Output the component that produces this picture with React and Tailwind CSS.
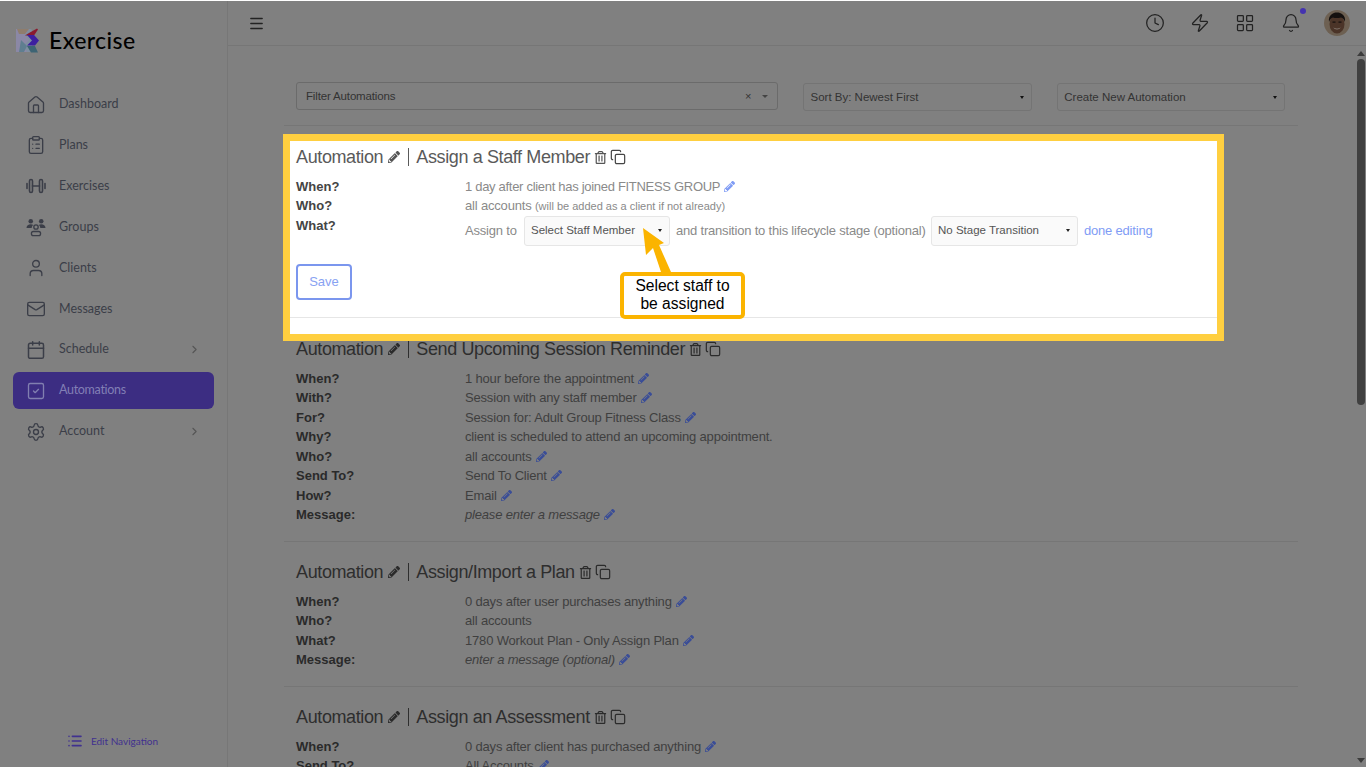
import React from 'react'
import { House, ClipboardList, Mail, Calendar, SquareCheck, Settings, ChevronRight, Clock, Zap, LayoutGrid, Bell, Menu, List, Copy, User } from 'lucide-react'
import { FaPencilAlt, FaRegTrashAlt } from 'react-icons/fa'

const DumbbellIcon = () => (
  <svg width="20" height="20" viewBox="0 0 20 20" fill="none" stroke="#3b3e48" strokeWidth="1.6" strokeLinecap="round">
    <rect x="3.5" y="3.5" width="3" height="13" rx="1.5" />
    <rect x="13.5" y="3.5" width="3" height="13" rx="1.5" />
    <path d="M6.5 10h7M1 7.5v5M19 7.5v5" />
  </svg>
)

const GroupIcon = () => (
  <svg width="21" height="20" viewBox="0 0 21 20" fill="#3b3e48">
    <circle cx="5" cy="4" r="2.4" />
    <circle cx="16" cy="4" r="2.4" />
    <path d="M0.5 11c0-2.5 2-4 4.5-4 1 0 2 .3 2.6.8-1 .7-1.6 1.9-1.6 3.2H0.5zM20.5 11c0-2.5-2-4-4.5-4-1 0-2 .3-2.6.8 1 .7 1.6 1.9 1.6 3.2h5.5z" />
    <circle cx="10.5" cy="10" r="2.3" fill="none" stroke="#3b3e48" strokeWidth="1.4" />
    <rect x="5.7" y="14.7" width="9.6" height="4.3" rx="2" fill="none" stroke="#3b3e48" strokeWidth="1.4" />
  </svg>
)

const Logo = () => (
  <svg width="25" height="25" viewBox="0 0 25 25" className="shrink-0">
    <rect x="0" y="1" width="16" height="23" rx="2" fill="#7f8ea0" />
    <path d="M0 1h13l-4 6 4 5-6 6 4 6H0z" fill="#8b88a6" />
    <path d="M1 1h12L9 6H3z" fill="#8f7d6d" />
    <path d="M13 5l8-4.5 1 1-4 6H9z" fill="#8a1a2e" />
    <path d="M11 7h7l5 5.5-4 5h-8l5-5z" fill="#3d1fa0" />
    <path d="M11 18h8l3 6.5h-7z" fill="#3d6474" />
    <path d="M5 12l6 6-3 6H3z" fill="#5f7e90" />
  </svg>
)

const Avatar = () => (
  <svg width="26" height="26" viewBox="0 0 26 26">
    <circle cx="13" cy="13" r="13" fill="#6d6052" />
    <ellipse cx="13" cy="14" rx="7.5" ry="9.5" fill="#4b3428" />
    <path d="M5 12C4 5 9 2.5 13 2.5S22 5 21 12c-1-2.5-2-4-4-4.5-3 .8-6 .8-8 0-2 .5-3 2-4 4.5z" fill="#14100f" />
    <rect x="8.5" y="11.5" width="3" height="1.2" fill="#15100e" />
    <rect x="14.5" y="11.5" width="3" height="1.2" fill="#15100e" />
    <path d="M9.5 17.5c2 1.6 5 1.6 7 0-.8 2.4-6.2 2.4-7 0z" fill="#a5a09a" />
  </svg>
)

const navItems = [
  { label: 'Dashboard', icon: <House size={20} strokeWidth={1.6} /> },
  { label: 'Plans', icon: <ClipboardList size={20} strokeWidth={1.6} /> },
  { label: 'Exercises', icon: <DumbbellIcon /> },
  { label: 'Groups', icon: <GroupIcon /> },
  { label: 'Clients', icon: <User size={20} strokeWidth={1.6} /> },
  { label: 'Messages', icon: <Mail size={20} strokeWidth={1.6} /> },
  { label: 'Schedule', icon: <Calendar size={20} strokeWidth={1.8} />, arrow: true },
  { label: 'Automations', icon: <SquareCheck size={20} strokeWidth={1.6} />, active: true },
  { label: 'Account', icon: <Settings size={20} strokeWidth={1.6} />, arrow: true },
]

const automations = [
  {
    name: 'Send Upcoming Session Reminder',
    rows: [
      ['When?', '1 hour before the appointment', true],
      ['With?', 'Session with any staff member', true],
      ['For?', 'Session for: Adult Group Fitness Class', true],
      ['Why?', 'client is scheduled to attend an upcoming appointment.', false],
      ['Who?', 'all accounts', true],
      ['Send To?', 'Send To Client', true],
      ['How?', 'Email', true],
      ['Message:', 'please enter a message', true, true],
    ],
  },
  {
    name: 'Assign/Import a Plan',
    rows: [
      ['When?', '0 days after user purchases anything', true],
      ['Who?', 'all accounts', false],
      ['What?', '1780 Workout Plan - Only Assign Plan', true],
      ['Message:', 'enter a message (optional)', true, true],
    ],
  },
  {
    name: 'Assign an Assessment',
    rows: [
      ['When?', '0 days after client has purchased anything', true],
      ['Send To?', 'All Accounts', true],
    ],
  },
]

const Title = ({ name, dim }) => (
  <div className={`flex items-center h-5 text-[18px] leading-5 tracking-[-0.38px] whitespace-nowrap ${dim ? 'text-[#2e2e2e]' : 'text-[#5a5a5a]'}`}>
    <span>Automation</span>
    <FaPencilAlt size={12} className={`ml-[5px] ${dim ? 'text-[#2b2b2b]' : 'text-[#555]'}`} />
    <span className={`ml-[8px] mr-[7px] w-px h-[18px] ${dim ? 'bg-[#2e2e2e]' : 'bg-[#5a5a5a]'}`} />
    <span>{name}</span>
    <FaRegTrashAlt size={13} className={`ml-[4px] ${dim ? 'text-[#2b2b2b]' : 'text-[#555]'}`} />
    <Copy size={16} strokeWidth={1.8} className={`ml-[3px] ${dim ? 'text-[#2b2b2b]' : 'text-[#444]'}`} />
  </div>
)

const Row = ({ label, value, edit, italic }) => (
  <div className="flex h-[19.5px] items-center text-[13px]">
    <b className="w-[169px] shrink-0 text-[#2a2a2a]">{label}</b>
    <span className={`text-[#3f3f3f] tracking-[-0.18px] whitespace-nowrap ${italic ? 'italic' : ''}`}>{value}</span>
    {edit && <FaPencilAlt size={11} className="ml-[4px] text-[#3a4d97]" />}
  </div>
)

const Dropdown = ({ label, className }) => (
  <div className={`flex items-center justify-between h-[30px] border border-[#e6e6e6] rounded-[3px] bg-[#fafafa] pl-[6px] pr-[7px] text-[11.5px] text-[#555] tracking-normal ${className}`}>
    <span className="pt-px">{label}</span>
    <span className="w-0 h-0 border-x-[2.5px] border-x-transparent border-t-[3px] border-t-[#222]" />
  </div>
)

const DimSelect = ({ label, className }) => (
  <div className={`flex items-center justify-between h-[28px] border border-[#747474] rounded-[3px] pl-[6px] pr-[7px] text-[11.5px] text-[#333] ${className}`}>
    <span className="pt-px">{label}</span>
    <span className="w-0 h-0 border-x-[2.5px] border-x-transparent border-t-[3px] border-t-[#111]" />
  </div>
)

const HighlightCard = () => (
  <div className="relative z-10 w-[941px] h-[207px] mt-2 -ml-px border-[7px] border-[#ffcf40] bg-white">
    <div className="pl-[6px] pt-[6px]">
      <Title name="Assign a Staff Member" />
      <div className="mt-[9.5px] text-[13px]">
        <div className="flex h-[19.5px] items-center">
          <b className="w-[169px] text-[#444]">When?</b>
          <span className="text-[#8a8a8a] tracking-[-0.3px]">1 day after client has joined FITNESS GROUP</span>
          <FaPencilAlt size={11} className="ml-[4px] text-[#7f9cf5]" />
        </div>
        <div className="flex h-[19.5px] items-center">
          <b className="w-[169px] text-[#444]">Who?</b>
          <span className="text-[#8a8a8a] tracking-[-0.18px]">all accounts <span className="text-[11px] tracking-normal">(will be added as a client if not already)</span></span>
        </div>
        <div className="flex h-[31px] items-start">
          <b className="w-[169px] text-[#444] leading-[19px]">What?</b>
          <div className="flex items-center text-[#8a8a8a] tracking-[-0.2px] whitespace-nowrap">
            <span className="w-[59px]">Assign to</span>
            <Dropdown label="Select Staff Member" className="w-[146px]" />
            <span className="ml-[6px] w-[255px]">and transition to this lifecycle stage (optional)</span>
            <Dropdown label="No Stage Transition" className="w-[147px]" />
            <span className="ml-[6px] text-[#7f9cf5]">done editing</span>
          </div>
        </div>
      </div>
      <button className="block mt-[17px] w-[56px] h-[36px] border-2 border-[#7b96ee] rounded-[4px] text-[13px] text-[#88a2f2]">Save</button>
    </div>
    <div className="absolute left-0 right-0 top-[176px] h-px bg-[#e6e6e6]" />
    <svg width="40" height="52" viewBox="0 0 40 52" className="absolute left-[344px] top-[84px]">
      <path d="M9 3 L30 18 L25 20 L37 47 L27 47 L19 23 L12 30 Z" fill="#fbb400" />
    </svg>
    <div className="absolute left-[330px] top-[131px] w-[125px] h-[47px] border-4 border-[#fbb400] rounded-[5px] bg-white flex items-center justify-center text-center text-[15.6px] leading-[18px] text-black">
      <span className="-mt-px">Select staff to<br />be assigned</span>
    </div>
  </div>
)

export default function App() {
  return (
    <div className="h-screen overflow-hidden bg-[#808080] border-y border-y-white flex [font-family:'Liberation_Sans',Arial,sans-serif]">
      <aside className="w-[228px] shrink-0 border-r border-[#777] flex flex-col [font-family:Lato,sans-serif]">
        <div className="flex items-center gap-[8px] pl-4 pt-[2px] h-[76px]">
          <Logo />
          <span className="text-[23px] leading-[26px] font-medium text-black tracking-[0.4px]">Exercise</span>
        </div>
        <nav className="mt-[9px] flex flex-col gap-[3.9px] px-[13px]">
          {navItems.map((item) => (
            <div
              key={item.label}
              className={`flex items-center h-[37px] rounded-[6px] pl-[13px] pr-[13px] text-[12.5px] ${item.active ? 'bg-[#3c2d82] text-[#827fb5]' : 'text-[#3b3e48]'}`}
            >
              <span className={`w-5 flex justify-center shrink-0 ${item.active ? 'text-[#817fb0]' : 'text-[#3b3e48]'}`}>{item.icon}</span>
              <span className={`ml-[13px] flex-1 ${item.active ? 'tracking-[-0.3px]' : ''}`}>{item.label}</span>
              {item.arrow && <ChevronRight size={13} className="text-[#555]" />}
            </div>
          ))}
        </nav>
        <div className="mt-auto mb-[18px] pr-[2px] flex items-center justify-center gap-2 text-[#40318f] text-[10px]">
          <List size={16} strokeWidth={2.4} />
          <span>Edit Navigation</span>
        </div>
      </aside>

      <div className="flex-1 min-w-0 flex flex-col">
        <header className="h-[45px] shrink-0 border-b border-[#767676] flex items-center justify-between pl-[20px] pr-[16px]">
          <Menu size={17} strokeWidth={2} className="text-[#222]" />
          <div className="flex items-center text-[#222]">
            <Clock size={20} strokeWidth={1.5} />
            <Zap size={20} strokeWidth={1.5} className="ml-[25px]" />
            <LayoutGrid size={20} strokeWidth={1.5} className="ml-[25px]" />
            <div className="relative ml-[26px]">
              <Bell size={20} strokeWidth={1.5} />
              <span className="absolute -top-[5px] -right-[5px] w-[6px] h-[6px] rounded-full bg-[#4433b0]" />
            </div>
            <div className="ml-[23px]"><Avatar /></div>
          </div>
        </header>

        <div className="flex flex-1 min-h-0">
          <main className="flex-1 min-w-0 overflow-hidden pl-[56px] pr-[57px]">
            <div className="flex pt-[36px] pb-[14px] border-b border-[#767676] pl-[12px] pr-[13px]">
              <div className="flex items-center justify-between w-[483px] h-[28px] border border-[#6b6b6b] rounded-[3px] pl-[9px] pr-[9px] text-[11.5px] text-[#333]">
                <span className="pt-px tracking-[-0.15px]">Filter Automations</span>
                <span className="flex items-center gap-[11px] text-[#333]">
                  <span className="text-[11px] leading-none">×</span>
                  <span className="w-0 h-0 border-x-[3px] border-x-transparent border-t-[3px] border-t-[#444]" />
                </span>
              </div>
              <DimSelect label="Sort By: Newest First" className="ml-[25px] mt-px w-[229px]" />
              <DimSelect label="Create New Automation" className="ml-[25px] mt-px w-[228px]" />
            </div>

            <HighlightCard />

            {automations.map((a, i) => (
              <div key={a.name} className={`px-[12px] pb-[16.5px] border-b border-[#767676] ${i === 0 ? '-mt-[2px]' : 'pt-[20px]'}`}>
                <Title name={a.name} dim />
                <div className="mt-[9.5px]">
                  {a.rows.map(([label, value, edit, italic]) => (
                    <Row key={label} label={label} value={value} edit={edit} italic={italic} />
                  ))}
                </div>
              </div>
            ))}
          </main>
          <div className="w-[11px] shrink-0 flex flex-col items-center pt-[5px] pb-[4px]">
            <span className="w-0 h-0 border-x-[4px] border-x-transparent border-b-[5px] border-b-[#3c3c3c]" />
            <span className="mt-[3px] w-2 h-[346px] rounded-full bg-[#404040]" />
            <span className="mt-auto w-0 h-0 border-x-[4px] border-x-transparent border-t-[5px] border-t-[#3c3c3c]" />
          </div>
        </div>
      </div>
    </div>
  )
}
